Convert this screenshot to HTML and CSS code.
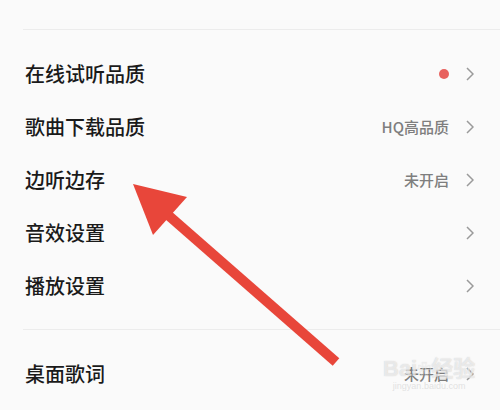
FILE: index.html
```html
<!DOCTYPE html>
<html lang="zh-CN">
<head>
<meta charset="utf-8">
<link rel="stylesheet" href="styles.css">
</head>
<body>
<div class="page">
  <div class="top"></div>
  <div class="group">
    <div class="row"><span class="label">在线试听品质</span><span class="right"><span class="dot"></span><svg class="chev" viewBox="0 0 8 14"><path d="M1 1 L7 7 L1 13"/></svg></span></div>
    <div class="row"><span class="label">歌曲下载品质</span><span class="right"><span class="value">HQ高品质</span><svg class="chev" viewBox="0 0 8 14"><path d="M1 1 L7 7 L1 13"/></svg></span></div>
    <div class="row"><span class="label">边听边存</span><span class="right"><span class="value">未开启</span><svg class="chev" viewBox="0 0 8 14"><path d="M1 1 L7 7 L1 13"/></svg></span></div>
    <div class="row"><span class="label">音效设置</span><span class="right"><svg class="chev" viewBox="0 0 8 14"><path d="M1 1 L7 7 L1 13"/></svg></span></div>
    <div class="row"><span class="label">播放设置</span><span class="right"><svg class="chev" viewBox="0 0 8 14"><path d="M1 1 L7 7 L1 13"/></svg></span></div>
  </div>
  <div class="group">
    <div class="row"><span class="label">桌面歌词</span><span class="right"><span class="value">未开启</span><svg class="chev" viewBox="0 0 8 14"><path d="M1 1 L7 7 L1 13"/></svg></span></div>
  </div>
  <svg class="arrow" viewBox="0 0 500 410" width="500" height="410">
    <line x1="336" y1="362" x2="168" y2="215" stroke="#e8463a" stroke-width="10"/>
    <polygon points="133,184 187,197 153,235" fill="#e8463a"/>
  </svg>
  <div class="watermark"><span class="wm-main">Bai<span class="paw">❀</span>经验</span><span class="wm-sub">jingyan.baidu.com</span></div>
</div>
</body>
</html>
```
FILE: styles.css
```css
html, body {
  margin: 0;
  padding: 0;
  background: #fafafa;
}
.page {
  position: relative;
  width: 500px;
  height: 410px;
  overflow: hidden;
  background: #fafafa;
  font-family: "Noto Sans CJK SC", "Noto Sans", sans-serif;
}
.top {
  height: 29px;
}
.group {
  margin-left: 23px;
  border-top: 1px solid #ececec;
  padding: 17px 0;
}
.row {
  height: 53px;
  display: flex;
  align-items: center;
  justify-content: space-between;
  padding: 0 26px 0 2px;
}
.label {
  font-size: 20px;
  font-weight: 500;
  color: #1a1a1a;
}
.right {
  display: flex;
  align-items: center;
  gap: 17px;
}
.value {
  font-size: 15px;
  font-weight: 500;
  color: #7e7e7e;
}
.dot {
  width: 10px;
  height: 10px;
  border-radius: 50%;
  background: #e8615e;
}
.chev {
  width: 8px;
  height: 14px;
  fill: none;
  stroke: #9a9a9a;
  stroke-width: 1.5;
}
.arrow {
  position: absolute;
  left: 0;
  top: 0;
}
.watermark {
  position: absolute;
  left: 383px;
  top: 357px;
  display: flex;
  flex-direction: column;
  align-items: center;
  color: rgba(255,255,255,0.6);
  pointer-events: none;
}
.wm-main {
  font-family: "Liberation Sans", "Noto Sans CJK SC", sans-serif;
  font-size: 22px;
  font-weight: bold;
  line-height: 24px;
  text-shadow: 0 0 1px rgba(150,150,150,0.5);
}
.paw {
  font-size: 14px;
  vertical-align: top;
}
.wm-sub {
  font-family: "Liberation Sans", sans-serif;
  font-size: 9px;
  color: rgba(200,200,200,0.5);
}
```
